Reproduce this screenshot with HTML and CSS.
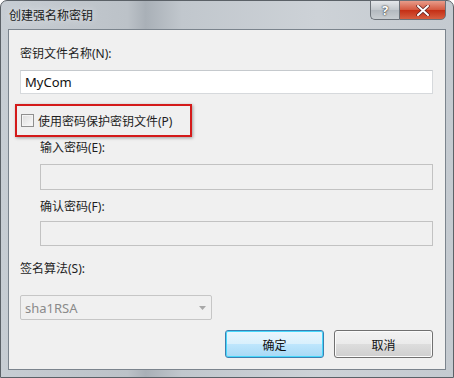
FILE: index.html
```html
<!DOCTYPE html>
<html lang="zh-CN">
<head>
    <meta charset="UTF-8">
    <title>创建强名称密钥</title>
    <link rel="stylesheet" href="styles.css">
</head>
<body>
    <div class="window">
        <div class="titlebar">
            <span class="title">创建强名称密钥</span>
            <div class="caption-buttons">
                <div class="cap-btn help">?</div>
                <div class="cap-btn close">
                    <svg width="14" height="11" viewBox="0 0 14 11">
                        <path d="M2 1 L12 10 M12 1 L2 10" stroke="#5a2020" stroke-width="3.4" stroke-linecap="round"/>
                        <path d="M2 1 L12 10 M12 1 L2 10" stroke="#fff" stroke-width="2" stroke-linecap="round"/>
                    </svg>
                </div>
            </div>
        </div>
        <div class="client">
            <div class="label">密钥文件名称(N):</div>
            <div class="textbox">MyCom</div>

            <div class="highlight">
                <span class="checkbox"></span>
                <span>使用密码保护密钥文件(P)</span>
            </div>

            <div class="indent">
                <div class="label">输入密码(E):</div>
                <div class="textbox disabled"></div>
                <div class="label">确认密码(F):</div>
                <div class="textbox disabled"></div>
            </div>

            <div class="label algo">签名算法(S):</div>
            <div class="select">
                <span>sha1RSA</span>
                <svg width="7" height="4" viewBox="0 0 7 4"><path d="M0 0 H7 L3.5 4 Z" fill="#a8a8a8"/></svg>
            </div>

            <div class="buttons">
                <div class="btn default">确定</div>
                <div class="btn">取消</div>
            </div>
        </div>
    </div>
</body>
</html>
```

FILE: styles.css
```css
body {
    margin: 0;
    padding: 0;
    font-family: "Noto Sans", "Noto Sans CJK SC", sans-serif;
    font-size: 12px;
    color: #1e1e1e;
    background: #fff;
}
.window {
    width: 454px;
    height: 378px;
    box-sizing: border-box;
    border: 1px solid #5b6167;
    border-radius: 7px 7px 0 0;
    background: linear-gradient(90deg, #c7cdd3 0%, #bcc2c8 28%, #a9b0b7 32%, #c1c7cd 40%, #cdd2d7 70%, #c4cad0 100%);
    display: flex;
    flex-direction: column;
    padding: 0 7px 7px 7px;
}
.titlebar {
    height: 28px;
    display: flex;
    justify-content: space-between;
    align-items: flex-start;
}
.title {
    margin-top: 6px;
    margin-left: 1px;
    color: #1a1a1a;
    font-family: "Noto Sans CJK SC", sans-serif;
    font-size: 12px;
    line-height: 16px;
    text-shadow: 0 0 6px #e8ecef;
}
.caption-buttons {
    display: flex;
    margin-top: -1px;
}
.cap-btn {
    height: 20px;
    box-sizing: border-box;
    border: 1px solid #6b7178;
    display: flex;
    align-items: center;
    justify-content: center;
}
.help {
    width: 29px;
    border-right: none;
    border-radius: 0 0 0 5px;
    background: linear-gradient(#e4e7ea, #c2c7cc 50%, #b3b9bf 51%, #c8cdd1);
    color: #fff;
    font-weight: bold;
    font-size: 13px;
    text-shadow: 0 0 2px #333, 0 0 1px #333;
}
.close {
    width: 47px;
    border-radius: 0 0 5px 0;
    background: linear-gradient(#e89c8a, #d4573e 50%, #c42e14 51%, #d65e40);
}
.client {
    flex: 1;
    background: #f0f0f0;
    border: 1px solid #7b848d;
    padding: 16px 12px 0 11px;
}
.label {
    line-height: 16px;
    height: 16px;
}
.textbox {
    margin-top: 8px;
    height: 24px;
    box-sizing: border-box;
    border: 1px solid #d6d9dc;
    border-top-color: #c5c9cd;
    background: #fff;
    padding: 0 4px;
    line-height: 22px;
    font-size: 13px;
    color: #111;
}
.textbox.disabled {
    height: 26px;
    background: #f0f0f0;
    border-color: #c2c2c2;
}
.highlight {
    margin-top: 10px;
    margin-left: -5px;
    width: 177px;
    height: 33px;
    box-sizing: border-box;
    border: 2px solid #d41a1a;
    box-shadow: 1px 1px 3px rgba(0, 0, 0, 0.35);
    display: flex;
    align-items: center;
    gap: 4px;
    padding-left: 4px;
}
.checkbox {
    width: 13px;
    height: 13px;
    box-sizing: border-box;
    border: 1px solid #8f8f8f;
    background: linear-gradient(135deg, #dcdcdc, #fafafa);
    box-shadow: inset 0 0 0 1px #f4f4f4;
}
.indent {
    padding-left: 20px;
}
.indent .label {
    margin-top: 3px;
}
.indent .textbox {
    margin-top: 8px;
}
.indent .textbox + .label {
    margin-top: 9px;
}
.indent .label + .textbox.disabled:last-child {
    margin-top: 6px;
    height: 25px;
}
.label.algo {
    margin-top: 15px;
}
.select {
    margin-top: 18px;
    width: 192px;
    height: 25px;
    box-sizing: border-box;
    border: 1px solid #c6c6c6;
    border-radius: 2px;
    background: #f0f0f0;
    display: flex;
    align-items: center;
    justify-content: space-between;
    padding: 0 5px 0 4px;
    color: #8a8a8a;
    font-size: 13px;
}
.buttons {
    margin-top: 10px;
    display: flex;
    justify-content: flex-end;
    gap: 10px;
}
.btn {
    width: 99px;
    height: 28px;
    box-sizing: border-box;
    border: 1px solid #707070;
    border-radius: 3px;
    background: linear-gradient(#f2f2f2, #ebebeb 50%, #dddddd 51%, #cfcfcf);
    box-shadow: inset 0 0 0 1px #fbfbfb;
    display: flex;
    align-items: center;
    justify-content: center;
    font-family: "Noto Sans CJK SC", sans-serif;
    color: #111;
}
.btn.default {
    border-color: #3c7fb1;
    background: linear-gradient(#eaf6fd, #d9f0fc 50%, #bee6fd 51%, #a7d9f5);
    box-shadow: inset 0 0 0 1px #48d8fb;
}
```
